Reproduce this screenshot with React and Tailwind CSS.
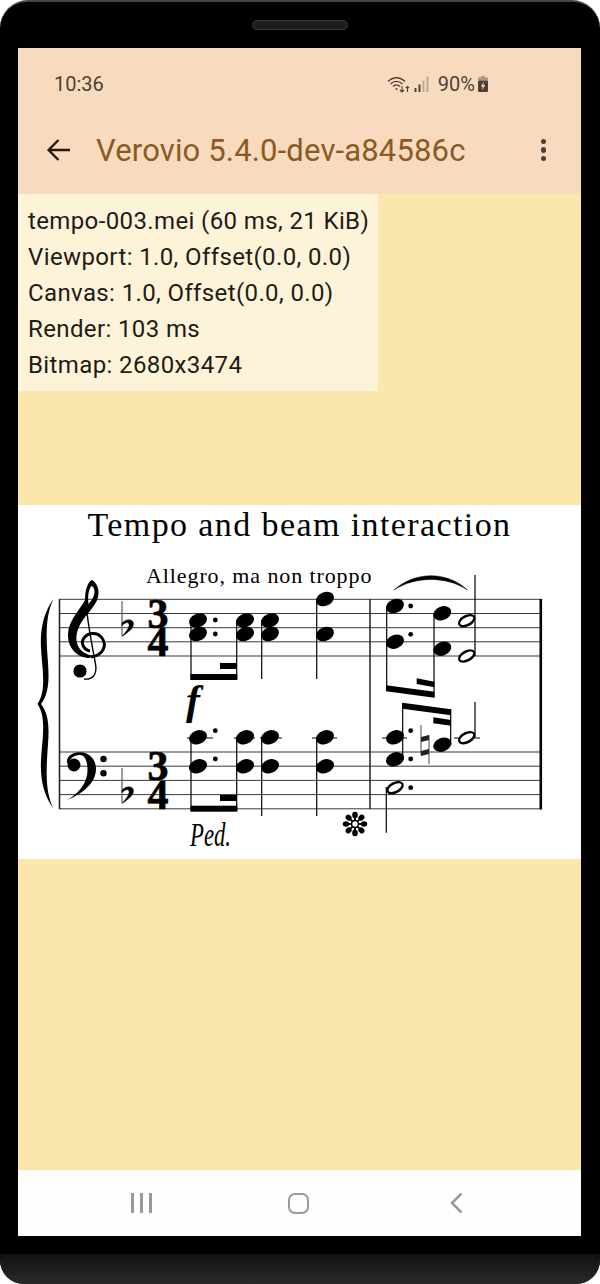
const infoLines = [
  "tempo-003.mei (60 ms, 21 KiB)",
  "Viewport: 1.0, Offset(0.0, 0.0)",
  "Canvas: 1.0, Offset(0.0, 0.0)",
  "Render: 103 ms",
  "Bitmap: 2680x3474",
];

function StatusIcons() {
  return (
    <div className="flex items-center text-[#4a4238]">
      <svg width="23" height="17" viewBox="0 0 23 17" fill="none" stroke="#4a4238" strokeWidth="1.3">
        <path d="M1 5.5 C6 0.5 13 0.5 18 5.5" />
        <path d="M3.5 8 C7 4.5 12 4.5 15.5 8" />
        <path d="M6 10.5 C8 8.5 11 8.5 13 10.5" />
        <circle cx="9.5" cy="13" r="1" fill="#4a4238" stroke="none" />
        <path d="M15 10 V16 M13 14 L15 16 L17 14" strokeWidth="1.1" />
        <path d="M20.5 16 V10.5 M18.8 12.2 L20.5 10.5 L22.2 12.2" strokeWidth="1.1" />
      </svg>
      <svg width="15" height="16" viewBox="0 0 15 16" className="ml-[4px]">
        <rect x="0.5" y="12" width="2" height="4" fill="#4a4238" />
        <rect x="4.5" y="8.5" width="2" height="7.5" fill="#4a4238" />
        <rect x="8.5" y="4.5" width="2" height="11.5" fill="#b9aa99" />
        <rect x="12.5" y="0.5" width="2" height="15.5" fill="#b9aa99" />
      </svg>
      <span className="ml-[9px] text-[20px] leading-none">90%</span>
      <svg width="10" height="16" viewBox="0 0 10 16" className="ml-[3px]">
        <rect x="3" y="0" width="4" height="2" fill="#a89a8a" />
        <rect x="0" y="1.5" width="10" height="3" fill="#a89a8a" />
        <rect x="0" y="4.5" width="10" height="11.5" rx="1" fill="#4a4238" />
        <path d="M6 5.5 L2.8 10.5 H4.8 L4 14.5 L7.2 9 H5.2 Z" fill="#f8dbbe" />
      </svg>
    </div>
  );
}

function Note({ x, y }) {
  return <ellipse cx={x} cy={y} rx="9.3" ry="6.8" transform={`rotate(-22 ${x} ${y})`} fill="#000" />;
}

function HalfNote({ x, y }) {
  return (
    <g transform={`rotate(-28 ${x} ${y})`}>
      <ellipse cx={x} cy={y} rx="9.4" ry="5.8" fill="#000" />
      <ellipse cx={x} cy={y} rx="7.2" ry="3.2" fill="#fff" />
    </g>
  );
}

function Dot({ x, y }) {
  return <circle cx={x} cy={y} r="2.4" fill="#000" />;
}

function Stem({ x, y1, y2 }) {
  return <line x1={x} x2={x} y1={y1} y2={y2} stroke="#000" strokeWidth="1.2" />;
}

function Ledger({ x1, x2, y }) {
  return <line x1={x1} x2={x2} y1={y} y2={y} stroke="#000" strokeWidth="1" />;
}

function Flat({ y }) {
  return (
    <g transform={`translate(122 ${y})`}>
      <line x1="0" x2="0" y1="0" y2="35" stroke="#666" strokeWidth="1.3" />
      <path d="M0 22 C3 18 11.5 17 11.5 23 C11.5 28 5 32 0 35.5 C3.5 31 7.5 27 7 23.5 C6.5 20.5 3 21.5 0 24.5 Z" fill="#000" stroke="#000" strokeWidth="0.4" />
    </g>
  );
}

function TimeSig({ top, bottom }) {
  const cls = "font-['Liberation_Serif'] font-bold";
  return (
    <g textAnchor="middle" fontSize="42" fill="#000" stroke="#000" strokeWidth="0.7">
      <text x="158" y={top} className={cls}>3</text>
      <text x="158" y={bottom} className={cls}>4</text>
    </g>
  );
}

function PedStar() {
  const petals = [0, 45, 90, 135, 180, 225, 270, 315];
  return (
    <g transform="translate(355 824)">
      {petals.map((a) => (
        <g key={a} transform={`rotate(${a})`}>
          <ellipse cx="0" cy="-9" rx="2.8" ry="3.2" fill="#000" />
          <line x1="0" x2="0" y1="-6" y2="-3" stroke="#000" strokeWidth="1.8" />
        </g>
      ))}
      <circle r="3.4" fill="#fff" stroke="#000" strokeWidth="1.5" />
    </g>
  );
}

function Score() {
  const upper = [599.3, 613.5, 627.7, 641.8, 656];
  const lower = [752, 766.2, 780.4, 794.6, 808.8];
  return (
    <svg width="563" height="314" viewBox="18 545 563 314" className="block">
      {[...upper, ...lower].map((y) => (
        <line key={y} x1="59" x2="541" y1={y} y2={y} stroke="#222" strokeWidth="0.9" />
      ))}

      {/* barlines */}
      <line x1="59.5" x2="59.5" y1="599" y2="809" stroke="#222" strokeWidth="1.6" />
      <line x1="370" x2="370" y1="599" y2="809" stroke="#222" strokeWidth="1.5" />
      <line x1="540.8" x2="540.8" y1="599" y2="809.5" stroke="#000" strokeWidth="2.6" />

      {/* brace */}
      <path
        d="M53.5 599 C44 612 40 628 41 648 C42 668 47 690 37.5 704 C47 718 42 740 41 760 C40 780 44 796 53.5 808.5 C47 796 46 780 47 760 C48 738 52 718 41 704 C52 690 48 668 47 648 C46 628 47 612 53.5 599 Z"
        fill="#000"
      />

      {/* treble clef */}
      <path
        fillRule="evenodd"
        d="M92 580 C96 582 99 588 98.5 594 C98 604 88 612 83 620 C78 627 76 634 76.5 640 C77 648 83 654 92 655.5 L90 658 C77 658 67.5 648 68 634 C68.5 620 80 610 85 600 C85 590 88 581 92 580 Z M91.5 586 C88.5 589 87.5 597 88.5 604 C91 601 93.5 598 94.3 594 C95 590 94 587 91.5 586 Z"
        fill="#000"
      />
      <path d="M90 651 C84 650 80 643 84 638 C88 632 98 632 102 638 C107 645 104 655 91 657" fill="none" stroke="#000" strokeWidth="3" />
      <path d="M86 602 C87 620 91 640 95.5 664 C97.5 675 92 680 84 679" fill="none" stroke="#000" strokeWidth="1.4" />
      <circle cx="80" cy="671" r="6.6" fill="#000" />

      {/* bass clef */}
      <path
        d="M67 763 C66 756 73 752 80 752.3 C90 752.5 96 760 96 769 C96 783 82 794 67.5 800 C79 793 88 783 87.5 769 C87.3 759 84 754.5 79 755 C74 755.5 70 758 69 763 Z"
        fill="#000"
      />
      <circle cx="74" cy="765" r="6.5" fill="#000" />
      <circle cx="103.5" cy="759" r="3.2" fill="#000" />
      <circle cx="103.5" cy="773.3" r="3.2" fill="#000" />

      <Flat y={601} />
      <Flat y={768} />
      <TimeSig top={628} bottom={656} />
      <TimeSig top={780} bottom={809} />

      <text x="146" y="583" fontSize="22" letterSpacing="0.9" fill="#000" className="font-['Liberation_Serif']">
        Allegro, ma non troppo
      </text>

      {/* measure 1, upper */}
      <Note x={198} y={620.5} />
      <Note x={198} y={634} />
      <Dot x={215.3} y={620} />
      <Dot x={215.3} y={634} />
      <Stem x={191} y1={620} y2={680} />
      <Note x={245} y={620.5} />
      <Note x={245} y={634} />
      <Stem x={236.7} y1={620} y2={680} />
      <rect x="190.5" y="674" width="46.8" height="6" fill="#000" />
      <rect x="220" y="663" width="17" height="6" fill="#000" />
      <Note x={270} y={620.5} />
      <Note x={270} y={634} />
      <Stem x={261.7} y1={620} y2={679} />
      <Note x={325} y={599} />
      <Note x={325} y={634} />
      <Stem x={316.7} y1={599} y2={679} />

      <text x="186" y="714" fontSize="42" fill="#000" className="font-['Liberation_Serif'] font-bold italic">
        f
      </text>

      {/* measure 1, lower */}
      <Ledger x1={187} x2={213} y={738} />
      <Note x={198} y={737.3} />
      <Note x={198} y={766.3} />
      <Dot x={215.3} y={730.7} />
      <Dot x={215.3} y={759} />
      <Stem x={191} y1={737} y2={811} />
      <Ledger x1={234} x2={255} y={738} />
      <Note x={245} y={737.3} />
      <Note x={245} y={766.3} />
      <Stem x={236.7} y1={737} y2={811} />
      <rect x="190.5" y="805.7" width="46.8" height="6" fill="#000" />
      <rect x="220" y="795" width="17" height="6" fill="#000" />
      <Ledger x1={260} x2={282} y={738} />
      <Note x={270} y={737.3} />
      <Note x={270} y={766.3} />
      <Stem x={261.7} y1={737} y2={816} />
      <Ledger x1={312} x2={337} y={738} />
      <Note x={325} y={737.3} />
      <Note x={325} y={766.3} />
      <Stem x={316.7} y1={737} y2={816} />

      <text x="190" y="846" fontSize="34" textLength="41" lengthAdjust="spacingAndGlyphs" fill="#000" className="font-['Liberation_Serif'] italic">
        Ped.
      </text>
      <PedStar />

      {/* measure 2, upper */}
      <path d="M394 590 C415 571 447 571 467.5 590 C447 576 415 576 394 590 Z" fill="#000" stroke="#000" strokeWidth="0.5" />
      <Note x={395} y={606} />
      <Note x={395} y={641.7} />
      <Dot x={410.7} y={606} />
      <Dot x={410.7} y={634.3} />
      <Stem x={386.7} y1={606} y2={691} />
      <polygon points="386,685.3 434.5,691.7 434.5,697.7 386,691.3" fill="#000" />
      <polygon points="416.7,678.3 434.5,681.7 434.5,687.3 416.7,684" fill="#000" />
      <Note x={442.3} y={613.3} />
      <Note x={442.3} y={648.7} />
      <Stem x={434} y1={613} y2={697} />
      <HalfNote x={466.7} y={620.7} />
      <HalfNote x={466.7} y={656} />
      <Stem x={475} y1={575} y2={656} />

      {/* measure 2, lower */}
      <polygon points="402.4,702.7 451,709.3 451,715.3 402.4,708.7" fill="#000" />
      <polygon points="433.3,717.3 451,720 451,725.7 433.3,723.3" fill="#000" />
      <Ledger x1={382} x2={407} y={738} />
      <Note x={395} y={737.3} />
      <Note x={395} y={759.3} />
      <Dot x={410.7} y={730.7} />
      <Dot x={410.7} y={759} />
      <Stem x={402.7} y1={703} y2={760} />
      <g stroke="#666" strokeWidth="1.2">
        <line x1="421" x2="421" y1="725" y2="755" />
        <line x1="429" x2="429" y1="735" y2="764" />
      </g>
      <polygon points="421,737 429,735 429,740 421,742" fill="#222" />
      <polygon points="421,751 429,749 429,754 421,756" fill="#222" />
      <Note x={442.3} y={744.7} />
      <Stem x={450.7} y1={709} y2={745} />
      <Ledger x1={454} x2={480} y={738} />
      <HalfNote x={466.7} y={737.7} />
      <Stem x={475} y1={702} y2={737} />
      <HalfNote x={395} y={787.7} />
      <Dot x={410.7} y={787.7} />
      <Stem x={386.3} y1={787} y2={832.7} />
    </svg>
  );
}

export default function App() {
  return (
    <div className="w-[600px] h-[1284px] bg-white font-['Roboto',sans-serif]">
      <div className="w-[600px] h-[1284px] flex flex-col bg-black rounded-t-[28px] rounded-b-[24px] overflow-hidden border-t-2 border-[#444]">
        {/* speaker */}
        <div className="h-[46px] flex justify-center pt-[18px] shrink-0">
          <div className="w-[96px] h-[10px] rounded-full border border-[#3a3a3a] bg-[#1d1d1d]" />
        </div>

        {/* screen */}
        <div className="mx-[18px] w-[563px] h-[1188px] flex flex-col shrink-0">
          <div className="h-[72px] shrink-0 bg-[#f8dbbe] flex items-center justify-between pl-[36px] pr-[93px]">
            <span className="text-[20px] text-[#4a4238] leading-none">10:36</span>
            <StatusIcons />
          </div>

          <div className="h-[74px] shrink-0 bg-[#f8dbbe] flex items-start">
            <div className="h-[60px] w-full flex items-center pl-[28px] pr-[35px]">
              <svg width="26" height="26" viewBox="0 0 26 26" fill="none" stroke="#221a12" strokeWidth="2.4" className="shrink-0">
                <path d="M24 13 H3 M12.5 3 L2.6 13 L12.5 23" />
              </svg>
              <span className="ml-[24px] text-[31px] leading-none tracking-[0.15px] text-[#8b5a24]">Verovio 5.4.0-dev-a84586c</span>
              <div className="ml-auto flex flex-col gap-[3px]">
                <div className="w-[5.5px] h-[5.5px] rounded-full bg-[#4a4238]" />
                <div className="w-[5.5px] h-[5.5px] rounded-full bg-[#4a4238]" />
                <div className="w-[5.5px] h-[5.5px] rounded-full bg-[#4a4238]" />
              </div>
            </div>
          </div>

          <div className="flex-1 bg-[#fbe7ae] flex flex-col">
            <div className="w-[360px] h-[197px] bg-[#fdf3d9] pl-[10px] pt-[9px] text-[24px] leading-[36px] tracking-[0.38px] text-[#1f1b16]">
              {infoLines.map((line) => (
                <div key={line}>{line}</div>
              ))}
            </div>

            <div className="mt-[114px] bg-white h-[354px]">
              <div className="h-[40px] text-center font-['Liberation_Serif'] text-[34px] leading-[40px] tracking-[1.4px] text-black">
                Tempo and beam interaction
              </div>
              <Score />
            </div>
          </div>

          <div className="h-[66px] shrink-0 bg-[#fefefc] relative flex items-center">
            <div className="flex items-center gap-[6.5px] ml-[113px]">
              <div className="w-[2.5px] h-[20px] bg-[#999]" />
              <div className="w-[2.5px] h-[20px] bg-[#999]" />
              <div className="w-[2.5px] h-[20px] bg-[#999]" />
            </div>
            <div className="w-[21px] h-[21px] rounded-[7px] border-[2.5px] border-[#999] ml-[136px]" />
            <svg width="13" height="22" viewBox="0 0 13 22" fill="none" stroke="#999" strokeWidth="2.5" className="ml-[141px]">
              <path d="M11.5 1.5 L2 11 L11.5 20.5" />
            </svg>
          </div>
        </div>

        {/* bottom bezel */}
        <div className="flex-1 mt-[18px] bg-gradient-to-b from-[#111] to-[#2a2a2a]" />
      </div>
    </div>
  );
}
